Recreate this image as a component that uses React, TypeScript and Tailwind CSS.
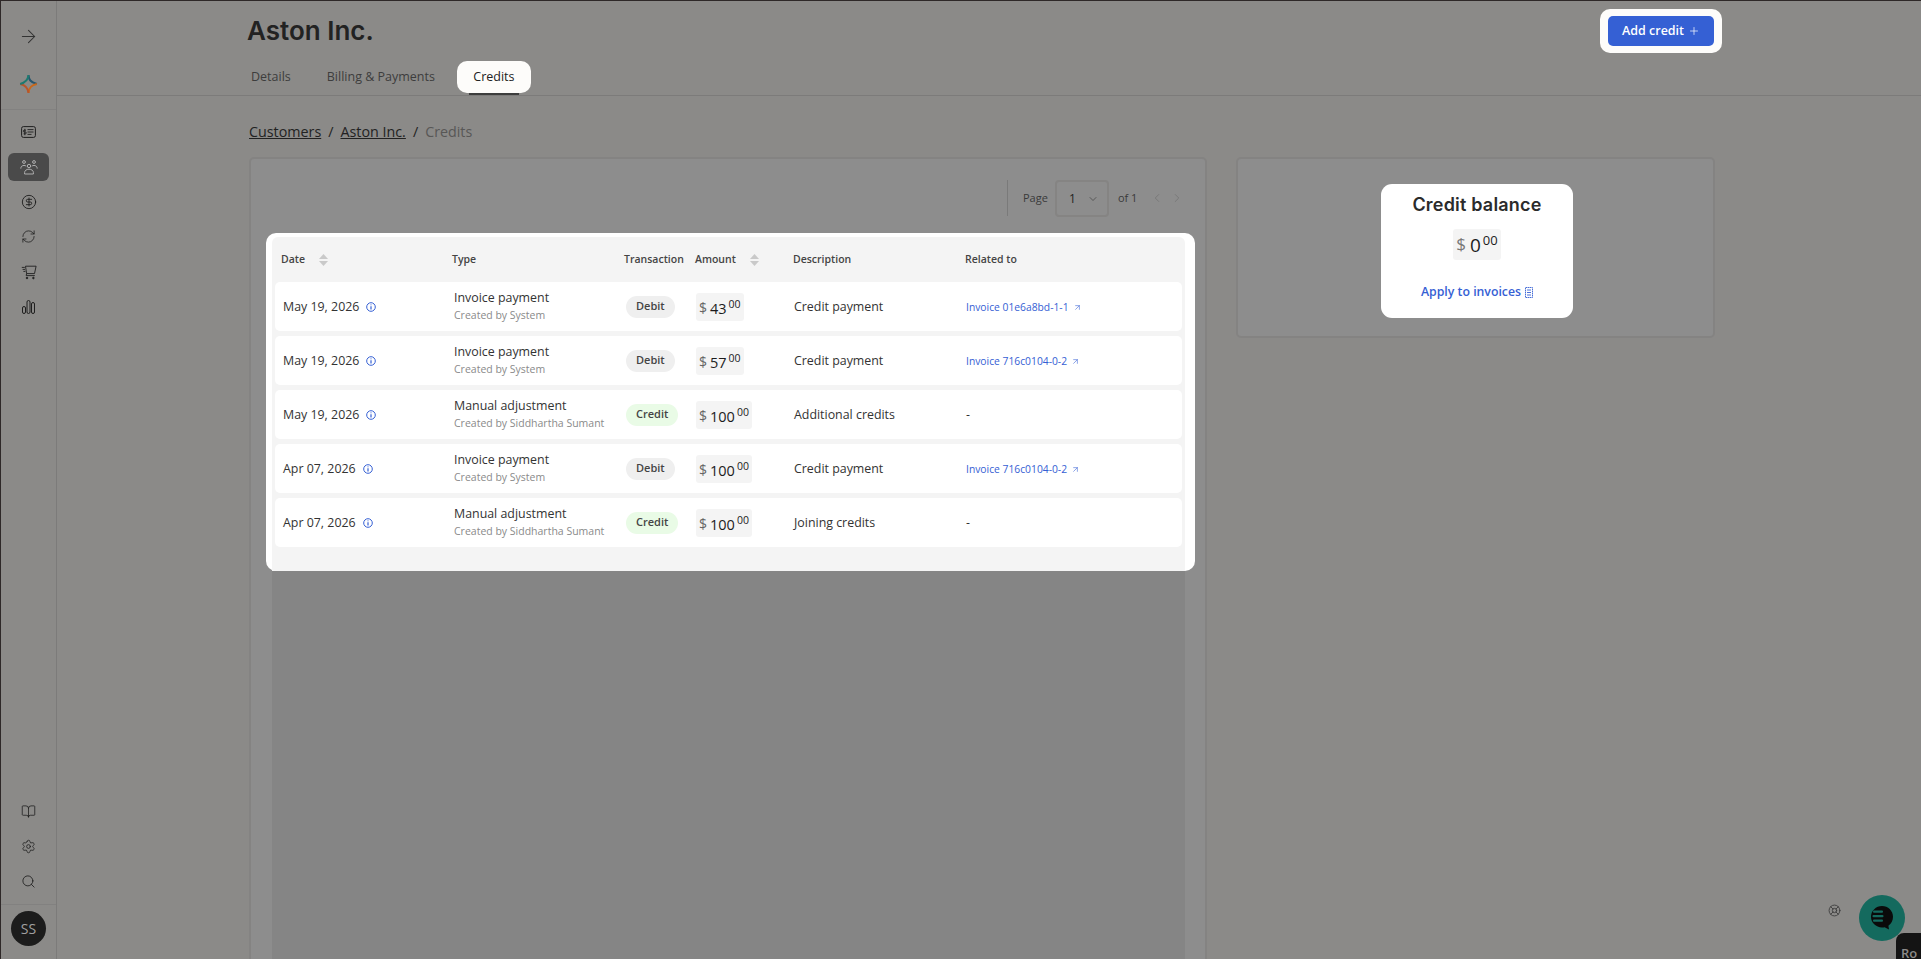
import React from 'react';
import {
  ArrowRight, BookOpen, ChevronDown, ChevronLeft, ChevronRight, CircleDollarSign, LifeBuoy, Plus,
  RefreshCw, Search, Settings, ArrowUpRight,
} from 'lucide-react';

const font = 'font-["Open_Sans",sans-serif]';
const headingFont = 'font-["Inter",sans-serif]';

interface Txn {
  date: string;
  type: string;
  by: string;
  kind: 'Debit' | 'Credit';
  amount: string;
  description: string;
  related?: string;
}

const rows: Txn[] = [
  { date: 'May 19, 2026', type: 'Invoice payment', by: 'Created by System', kind: 'Debit', amount: '43', description: 'Credit payment', related: 'Invoice 01e6a8bd-1-1' },
  { date: 'May 19, 2026', type: 'Invoice payment', by: 'Created by System', kind: 'Debit', amount: '57', description: 'Credit payment', related: 'Invoice 716c0104-0-2' },
  { date: 'May 19, 2026', type: 'Manual adjustment', by: 'Created by Siddhartha Sumant', kind: 'Credit', amount: '100', description: 'Additional credits' },
  { date: 'Apr 07, 2026', type: 'Invoice payment', by: 'Created by System', kind: 'Debit', amount: '100', description: 'Credit payment', related: 'Invoice 716c0104-0-2' },
  { date: 'Apr 07, 2026', type: 'Manual adjustment', by: 'Created by Siddhartha Sumant', kind: 'Credit', amount: '100', description: 'Joining credits' },
];

const gridCols = 'grid grid-cols-[171px_172px_70px_98px_172px_1fr]';

const SortIcon = () => (
  <svg width="9" height="12" viewBox="0 0 9 12" className="fill-[#c9c9c9]">
    <path d="M4.5 0 9 5H0z" />
    <path d="M4.5 12 0 7h9z" />
  </svg>
);

const InfoDot = () => (
  <svg width="10" height="10" viewBox="0 0 10 10" fill="none" className="stroke-[#3560d4]">
    <circle cx="5" cy="5" r="4.3" strokeWidth="1" />
    <path d="M5 2.600v.7M5 4.300v3.100" strokeWidth="1.2" />
  </svg>
);

const IdIcon = () => (
  <svg width="15" height="12" viewBox="0 0 15 12" fill="none" stroke="#1f1f1f" strokeWidth="1">
    <rect x="0.6" y="0.6" width="13.8" height="10.8" rx="1.8" />
    <path d="M6.500 3.600h6M6.500 6h6M6.500 8.400h4M3.800 2.800v6.400M5 4.200H3.200a.9.9 0 0 0 0 1.800h1.200a.9.9 0 0 1 0 1.800H2.600" strokeWidth="0.9" />
  </svg>
);

const TeamIcon = () => (
  <svg width="18" height="16" viewBox="0 0 18 16" fill="none" stroke="#b9b9b9" strokeWidth="0.9">
    <circle cx="4" cy="3" r="1.4" />
    <circle cx="14" cy="3" r="1.4" />
    <circle cx="9" cy="7" r="1.7" />
    <path d="M0.800 9.600c0-2 1.400-3.200 3.200-3.200 1 0 1.700.3 2.200.8M17.200 9.600c0-2-1.400-3.200-3.200-3.200-1 0-1.700.3-2.200.8" />
    <path d="M4.600 15v-1.400c0-2 1.900-3.400 4.400-3.400s4.400 1.400 4.400 3.400V15z" />
  </svg>
);

const CartIcon = () => (
  <svg width="16" height="16" viewBox="0 0 16 16" fill="none" stroke="#1f1f1f" strokeWidth="0.9">
    <path d="M4.500 2.200h10.600l-1.600 7.400H5.600L4.500 2.200zM5.600 9.600l-.4 2h8.600" />
    <path d="M0.800 3.400h3M1.600 5.400h2.400M2.400 7.400h2" />
    <circle cx="6" cy="14" r="0.8" fill="#1f1f1f" />
    <circle cx="12.400" cy="14" r="0.8" fill="#1f1f1f" />
  </svg>
);

const BarsIcon = () => (
  <svg width="13" height="14" viewBox="0 0 13 14" fill="none" stroke="#1f1f1f" strokeWidth="1">
    <rect x="0.5" y="6.5" width="3" height="7" rx="1.5" />
    <rect x="5" y="0.5" width="3" height="13" rx="1.5" />
    <rect x="9.5" y="2.5" width="3" height="11" rx="1.5" />
  </svg>
);

const StarLogo = () => (
  <svg width="19" height="20" viewBox="0 0 17 18" fill="none" strokeWidth="1.8">
    <path d="M8.500 1C8.900 5 10 7.300 16 9" stroke="#27566e" />
    <path d="M16 9c-5 .9-7 3-7.500 8" stroke="#c9681a" />
    <path d="M8.500 17C8 12.400 6 10 1 9" stroke="#b8552a" />
    <path d="M1 9c5-1.300 7-3.600 7.500-8" stroke="#1e7a70" />
  </svg>
);

const ReceiptIcon = () => (
  <svg width="8" height="11" viewBox="0 0 8 11" fill="none" stroke="#3560d4" strokeWidth="0.9">
    <path d="M0.500 0.500h7v10h-7z" strokeDasharray="1.500 0.500" />
    <path d="M2 3h4M2 5.500h4M2 8h4" />
  </svg>
);

function SideItem({ children, active }: { children: React.ReactNode; active?: boolean }) {
  return (
    <div className="h-[35px] flex items-center justify-center">
      <div className={`w-[41px] h-[28px] rounded-[6px] flex items-center justify-center ${active ? 'bg-[#4a4a4a]' : ''}`}>
        {children}
      </div>
    </div>
  );
}

function Money({ value, big }: { value: string; big?: boolean }) {
  if (big) {
    return (
      <div className="inline-flex h-[31px] items-start bg-[#f4f4f4] rounded-[3px] px-[3px] pt-[4px]">
        <span className="text-[17px] leading-[22px] text-[#777] mr-[4px]">$</span>
        <span className="text-[19px] leading-[24px] text-[#1c1c1c]">{value}</span>
        <span className="text-[13px] leading-[14px] text-[#1c1c1c] ml-[2px]">00</span>
      </div>
    );
  }
  return (
    <div className="inline-flex h-[28px] items-start bg-[#f4f4f4] rounded-[3px] px-[3px] pt-[6px]">
      <span className="text-[14px] leading-[18px] text-[#666] mr-[3px]">$</span>
      <span className="text-[14.5px] leading-[19px] text-[#1c1c1c]">{value}</span>
      <span className="text-[10.5px] leading-[11px] text-[#1c1c1c] ml-[2px]">00</span>
    </div>
  );
}

function TxnRow({ row }: { row: Txn }) {
  return (
    <div className={`${gridCols} h-[49px] items-center bg-white rounded-[5px] pl-[8px] text-[12.4px] text-[#333]`}>
      <div className="flex items-center gap-[7px] pt-[1px]">
        <span>{row.date}</span>
        <InfoDot />
      </div>
      <div className="pb-[2px]">
        <div className="leading-[18px]">{row.type}</div>
        <div className="text-[10.5px] leading-[16px] text-[#8a8a8a]">{row.by}</div>
      </div>
      <div>
        <span className={`inline-flex h-[22px] items-center rounded-full px-[10px] text-[11px] font-semibold text-[#444] ${row.kind === 'Credit' ? 'bg-[#e9fbe6]' : 'bg-[#efefef]'}`}>
          {row.kind}
        </span>
      </div>
      <div><Money value={row.amount} /></div>
      <div className="pt-[1px]">{row.description}</div>
      <div className="pt-[1px]">
        {row.related ? (
          <span className="inline-flex items-center gap-[4px] text-[10.3px] text-[#3560d4]">
            {row.related}
            <ArrowUpRight className="w-[9px] h-[9px]" strokeWidth={1.5} />
          </span>
        ) : (
          '-'
        )}
      </div>
    </div>
  );
}

export default function App() {
  return (
    <div className={`${font} relative flex h-[959px] w-full overflow-hidden bg-[#8b8a88] text-[#222] border-t border-l border-[#2e2828]`}>
      {/* Sidebar */}
      <aside className="w-[56px] shrink-0 flex flex-col border-r border-[#7c7b7a]">
        <div className="h-[109px] shrink-0 flex flex-col items-center border-b border-[#828180] pt-[25px]">
          <ArrowRight className="w-[21px] h-[21px] text-[#333]" strokeWidth={1.2} />
          <div className="mt-[27px]"><StarLogo /></div>
        </div>
        <div className="mt-[4px] flex flex-col">
          <SideItem><IdIcon /></SideItem>
          <SideItem active><TeamIcon /></SideItem>
          <SideItem><CircleDollarSign className="w-[16px] h-[16px] text-[#1a1a1a]" strokeWidth={1.3} /></SideItem>
          <SideItem><RefreshCw className="w-[15px] h-[15px] text-[#1a1a1a]" strokeWidth={1.2} /></SideItem>
          <SideItem><CartIcon /></SideItem>
          <SideItem><BarsIcon /></SideItem>
        </div>
        <div className="mt-auto flex flex-col">
          <SideItem><BookOpen className="w-[15px] h-[15px] text-[#1a1a1a]" strokeWidth={1.2} /></SideItem>
          <SideItem><Settings className="w-[15px] h-[15px] text-[#1a1a1a]" strokeWidth={1.2} /></SideItem>
          <SideItem><Search className="w-[15px] h-[15px] text-[#1a1a1a]" strokeWidth={1.3} /></SideItem>
          <div className="h-[55px] mt-[5px] border-t border-[#828180] flex items-start justify-center pt-[6px]">
            <div className="w-[35px] h-[35px] rounded-full bg-[#1c1c1c] text-[#a0a0a0] text-[14px] flex items-center justify-center">SS</div>
          </div>
        </div>
      </aside>

      <div className="flex-1 min-w-0 flex flex-col">
        {/* Header */}
        <header className="h-[95px] shrink-0 border-b border-[#7c7b7a] pl-[190px] pr-[199px] flex justify-between">
          <div>
            <h1 className={`${headingFont} text-[26px] leading-[32px] font-semibold text-[#222] mt-[14px]`}>Aston Inc.</h1>
            <nav className="flex items-start mt-[14px] text-[12.5px]">
              <div className="h-[32px] flex items-center ml-[4px] text-[#3d3d3d]">Details</div>
              <div className="h-[32px] flex items-center ml-[36px] text-[#3d3d3d]">Billing &amp; Payments</div>
              <div className="relative ml-[22px] h-[32px] w-[74px] rounded-[10px] bg-[#fdfcfa] flex items-center justify-center font-medium text-[#222]">
                Credits
                <span className="absolute left-[12px] right-[12px] -bottom-[2px] h-[2px] bg-[#3d3d3d]" />
              </div>
            </nav>
          </div>
          <div className="mt-[8px] h-[44px] rounded-[10px] bg-[#fdfcfa] px-[8px] py-[7px]">
            <button className="h-[30px] w-[106px] rounded-[5px] bg-[#3560d4] text-white text-[12.5px] font-semibold flex items-center justify-center gap-[4px]">
              Add credit <Plus className="w-[12px] h-[12px]" strokeWidth={1.4} />
            </button>
          </div>
        </header>

        {/* Content */}
        <main className="flex-1 min-h-0 pl-[192px] flex flex-col">
          <div className="h-[61px] shrink-0 flex items-center gap-[7px] text-[14.3px] font-medium text-[#222] pt-[10px]">
            <span className="underline">Customers</span>
            <span>/</span>
            <span className="underline">Aston Inc.</span>
            <span>/</span>
            <span className="text-[#585756]">Credits</span>
          </div>

          <div className="flex-1 min-h-0 flex gap-[29px] items-start">
            <section className="w-[958px] h-[900px] rounded-[5px] border-2 border-[#848382] bg-[#8d8d8d] flex flex-col">
              <div className="h-[74px] shrink-0 flex items-start pt-[21px] pl-[756px] text-[11px] text-[#3a3a3a]">
                <div className="h-[36px] border-l border-[#7a7a7a] pl-[15px] flex items-center">Page</div>
                <div className="ml-[7px] h-[37px] w-[54px] rounded-[4px] border-2 border-[#858483] flex items-center justify-between pl-[12px] pr-[8px] text-[12px] text-[#1f1f1f]">
                  1 <ChevronDown className="w-[12px] h-[12px] text-[#3a3a3a]" strokeWidth={1.3} />
                </div>
                <div className="ml-[9px] h-[36px] flex items-center">of 1</div>
                <div className="ml-[13px] h-[36px] flex items-center gap-[6px] text-[#707070]">
                  <ChevronLeft className="w-[14px] h-[14px]" strokeWidth={1.2} />
                  <ChevronRight className="w-[14px] h-[14px]" strokeWidth={1.2} />
                </div>
              </div>

              <div className="flex-1 ml-[21px] mr-[20px] bg-[#858585]">
                <div className="-ml-[6px] -mr-[10px] h-[338px] rounded-[10px] bg-white pt-[4px] pl-[6px] pr-[10px]">
                  <div className="h-[334px] bg-[#f4f4f4] rounded-t-[6px] px-[3px]">
                    <div className="grid grid-cols-[171px_172px_71px_98px_172px_1fr] h-[45px] items-center pl-[6px] text-[10.5px] font-semibold text-[#444]">
                      <div className="flex items-center gap-[14px]">Date <SortIcon /></div>
                      <div>Type</div>
                      <div>Transaction</div>
                      <div className="flex items-center gap-[14px]">Amount <SortIcon /></div>
                      <div>Description</div>
                      <div>Related to</div>
                    </div>
                    <div className="flex flex-col gap-[5px]">
                      {rows.map((row, i) => <TxnRow key={i} row={row} />)}
                    </div>
                  </div>
                </div>
              </div>
            </section>

            <section className="w-[479px] h-[181px] rounded-[5px] border-2 border-[#848382] bg-[#8d8d8d] flex justify-center pt-[25px]">
              <div className="ml-[3px] w-[192px] h-[134px] rounded-[11px] bg-white flex flex-col items-center pt-[9px]">
                <div className={`${headingFont} text-[18px] leading-[24px] font-semibold tracking-[0.2px] text-[#2b2b2b]`}>Credit balance</div>
                <div className="mt-[12px]"><Money value="0" big /></div>
                <div className="mt-[23px] flex items-center gap-[4px] text-[12.3px] font-semibold text-[#3560d4]">
                  Apply to invoices <ReceiptIcon />
                </div>
              </div>
            </section>
          </div>
        </main>
      </div>

      {/* Support widgets */}
      <LifeBuoy className="absolute left-[1827px] top-[903px] w-[13px] h-[13px] text-[#3a3a3a]" strokeWidth={1.6} />
      <div className="absolute left-[1858px] top-[894px] w-[46px] h-[46px] rounded-full bg-[#146a5e] flex items-center justify-center">
        <svg width="24" height="26" viewBox="0 0 24 26">
          <path d="M12 1c6 0 11 4.600 11 10.800 0 3.800-1.800 7-4.600 9l.6 3.600-4.400-2.200c-.8.2-1.700.3-2.600.3-6 0-11-4.800-11-10.700S6 1 12 1z" fill="#0a0a0a" />
          <rect x="3" y="5.500" width="10" height="2.200" rx="1" fill="#146a5e" />
          <rect x="2.500" y="10" width="11" height="2.200" rx="1" fill="#146a5e" />
          <rect x="3" y="14.500" width="10" height="2.200" rx="1" fill="#146a5e" />
        </svg>
      </div>
      <div className="absolute left-[1895px] top-[932px] w-[40px] h-[40px] rounded-tl-[8px] bg-[#141414] pl-[5px] pt-[11px] text-[13px] font-semibold leading-[18px] text-[#8b8a88]">
        Ro
      </div>
    </div>
  );
}
